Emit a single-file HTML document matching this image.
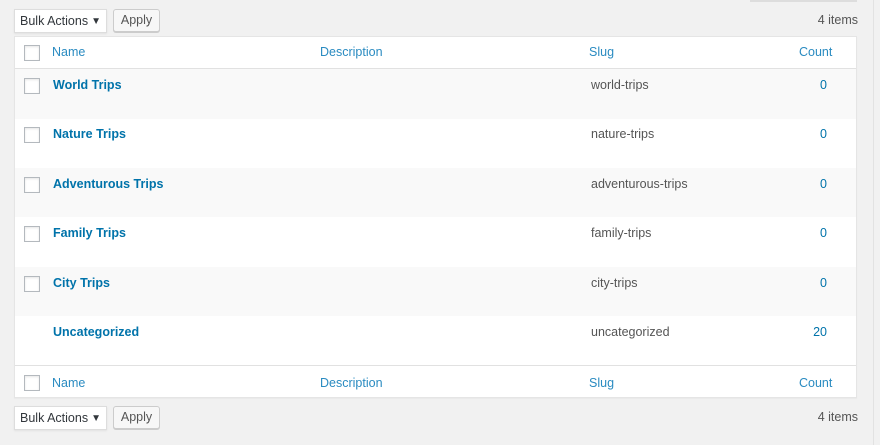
<!DOCTYPE html><html><head><style>
body{margin:0;width:880px;height:445px;background:#f1f1f1;font-family:"Liberation Sans",sans-serif;font-size:12.5px;color:#555;position:relative;overflow:hidden}
.a{position:absolute}
.sel{background:#fff;border:1px solid #ddd;box-shadow:0 1px 2px rgba(0,0,0,.07);color:#32373c;width:93px;height:24px;line-height:23px;padding-left:5px;box-sizing:border-box;font-size:12.5px}
.sel span{position:absolute;right:5px;font-size:10px;top:0}
.btn{background:#f7f7f7;border:1px solid #ccc;border-radius:3px;box-shadow:0 1px 0 #ccc;color:#555;width:47px;height:23px;line-height:21px;text-align:center;box-sizing:border-box}
.tbl{left:14px;top:36px;width:843px;height:362px;background:#fff;border:1px solid #e5e5e5;box-sizing:border-box;box-shadow:0 1px 1px rgba(0,0,0,.04)}
.row{position:absolute;left:0;width:841px;height:49.5px}
.alt{background:#f9f9f9}
.cb{position:absolute;left:9px;width:14px;height:14px;border:1px solid #b4b9be;background:#fff;box-shadow:inset 0 1px 2px rgba(0,0,0,.1)}
.h{color:#2a8bc1;position:absolute}
.n{color:#0073aa;font-weight:bold;position:absolute;left:38px}
.s{position:absolute;left:576px}
.c{position:absolute;right:29px;color:#0073aa}
</style></head><body>
<div class="a" style="left:750px;top:0;width:107px;height:2px;background:#ddd"></div>
<div class="a" style="left:873px;top:0;width:1px;height:445px;background:#e2e2e2"></div>
<div class="a sel" style="left:14px;top:9px">Bulk Actions<span>▼</span></div>
<div class="a btn" style="left:113px;top:9px">Apply</div>
<div class="a" style="right:22px;top:13px;color:#555">4 items</div>
<div class="a tbl">
 <div class="row" style="top:0;height:31px;border-bottom:1px solid #e1e1e1">
  <div class="cb" style="top:8px"></div>
  <div class="h" style="left:37px;top:8px">Name</div>
  <div class="h" style="left:305px;top:8px">Description</div>
  <div class="h" style="left:574px;top:8px">Slug</div>
  <div class="h" style="left:784px;top:8px">Count</div>
 </div>
 <div class="row alt" style="top:32px"><div class="cb" style="top:9px"></div><div class="n" style="top:9px">World Trips</div><div class="s" style="top:9px">world-trips</div><div class="c" style="top:9px">0</div></div>
 <div class="row" style="top:81px"><div class="cb" style="top:9px"></div><div class="n" style="top:9px">Nature Trips</div><div class="s" style="top:9px">nature-trips</div><div class="c" style="top:9px">0</div></div>
 <div class="row alt" style="top:130.5px"><div class="cb" style="top:9px"></div><div class="n" style="top:9px">Adventurous Trips</div><div class="s" style="top:9px">adventurous-trips</div><div class="c" style="top:9px">0</div></div>
 <div class="row" style="top:180px"><div class="cb" style="top:9px"></div><div class="n" style="top:9px">Family Trips</div><div class="s" style="top:9px">family-trips</div><div class="c" style="top:9px">0</div></div>
 <div class="row alt" style="top:229.5px"><div class="cb" style="top:9px"></div><div class="n" style="top:9px">City Trips</div><div class="s" style="top:9px">city-trips</div><div class="c" style="top:9px">0</div></div>
 <div class="row" style="top:279px"><div class="n" style="top:9px">Uncategorized</div><div class="s" style="top:9px">uncategorized</div><div class="c" style="top:9px">20</div></div>
 <div class="row" style="top:328px;height:32px;border-top:1px solid #e1e1e1">
  <div class="cb" style="top:9px"></div>
  <div class="h" style="left:37px;top:10px">Name</div>
  <div class="h" style="left:305px;top:10px">Description</div>
  <div class="h" style="left:574px;top:10px">Slug</div>
  <div class="h" style="left:784px;top:10px">Count</div>
 </div>
</div>
<div class="a sel" style="left:14px;top:406px">Bulk Actions<span>▼</span></div>
<div class="a btn" style="left:113px;top:406px">Apply</div>
<div class="a" style="right:22px;top:410px;color:#555">4 items</div>
</body></html>
